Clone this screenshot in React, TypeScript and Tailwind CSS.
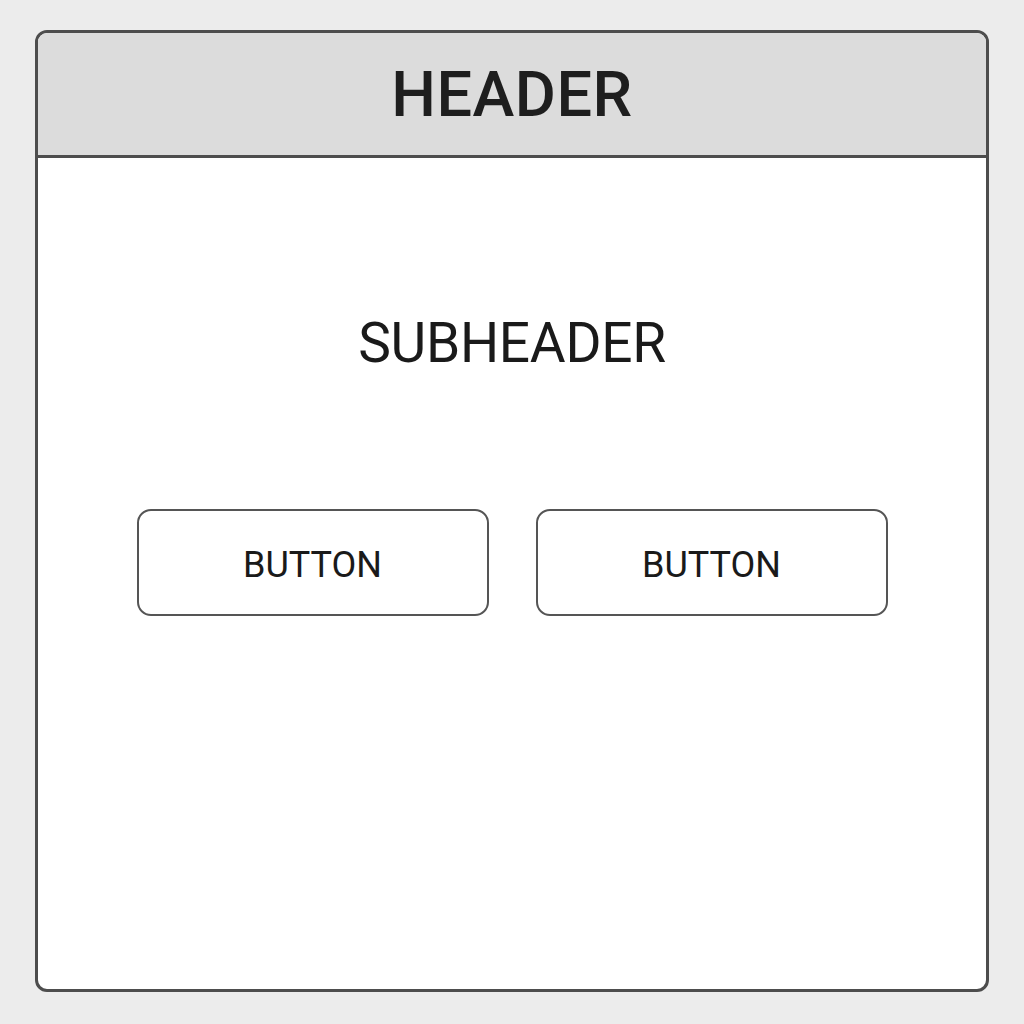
import React from "react";

export default function App() {
  return (
    <div className="w-[1024px] h-[1024px] bg-[#ececec] pt-[30px] pl-[35px]" style={{ fontFamily: "Roboto, 'Noto Sans', sans-serif" }}>
      <div className="w-[954px] h-[962px] border-[3px] border-[#4d4d4d] rounded-[12px] overflow-hidden bg-white flex flex-col">
        <div className="h-[125px] shrink-0 bg-[#dcdcdc] border-b-[3px] border-[#4d4d4d] flex items-center justify-center">
          <span className="text-[63px] leading-none font-medium text-[#1e1e1e] tracking-[0.5px]">HEADER</span>
        </div>
        <div className="flex flex-col items-center">
          <div className="mt-[158px] text-[55px] leading-none text-[#1a1a1a] tracking-[-0.3px]">SUBHEADER</div>
          <div className="mt-[138px] flex gap-[47px]">
            <button className="w-[352px] h-[107px] pt-[4px] border-2 border-[#555555] rounded-[14px] bg-white flex items-center justify-center text-[36px] leading-none text-[#1a1a1a]">BUTTON</button>
            <button className="w-[352px] h-[107px] pt-[4px] border-2 border-[#555555] rounded-[14px] bg-white flex items-center justify-center text-[36px] leading-none text-[#1a1a1a]">BUTTON</button>
          </div>
        </div>
      </div>
    </div>
  );
}
